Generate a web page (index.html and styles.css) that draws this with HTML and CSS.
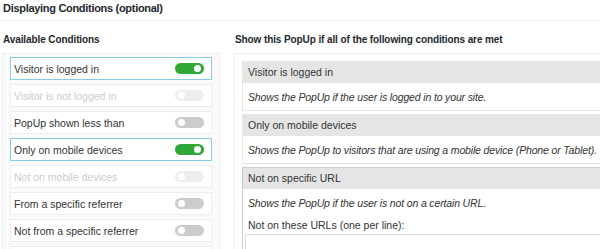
FILE: index.html
```html
<!DOCTYPE html>
<html lang="en">
<head>
    <meta charset="UTF-8">
    <meta name="viewport" content="width=device-width, initial-scale=1.0">
    <title>Displaying Conditions</title>
    <link rel="stylesheet" href="styles.css">
</head>
<body>
    <h2 class="section-title">Displaying Conditions (optional)</h2>

    <div class="columns">
        <div class="col-left">
            <h3 class="col-title">Available Conditions</h3>
            <ul class="cond-list">
                <li class="cond active"><span>Visitor is logged in</span><i class="toggle on"></i></li>
                <li class="cond disabled"><span>Visitor is not logged in</span><i class="toggle"></i></li>
                <li class="cond"><span>PopUp shown less than</span><i class="toggle"></i></li>
                <li class="cond active"><span>Only on mobile devices</span><i class="toggle on"></i></li>
                <li class="cond disabled"><span>Not on mobile devices</span><i class="toggle"></i></li>
                <li class="cond"><span>From a specific referrer</span><i class="toggle"></i></li>
                <li class="cond"><span>Not from a specific referrer</span><i class="toggle"></i></li>
                <li class="cond"><span>Not on specific URL</span><i class="toggle on"></i></li>
            </ul>
        </div>

        <div class="col-right">
            <h3 class="col-title">Show this PopUp if all of the following conditions are met</h3>
            <div class="rules">
                <div class="rule">
                    <div class="rule-head">Visitor is logged in</div>
                    <div class="rule-body"><em>Shows the PopUp if the user is logged in to your site.</em></div>
                </div>
                <div class="rule">
                    <div class="rule-head">Only on mobile devices</div>
                    <div class="rule-body"><em>Shows the PopUp to visitors that are using a mobile device (Phone or Tablet).</em></div>
                </div>
                <div class="rule open">
                    <div class="rule-head">Not on specific URL</div>
                    <div class="rule-body">
                        <em>Shows the PopUp if the user is not on a certain URL.</em>
                        <label class="field-label">Not on these URLs (one per line):</label>
                        <textarea class="urls"></textarea>
                    </div>
                </div>
            </div>
        </div>
    </div>
</body>
</html>
```

FILE: styles.css
```css
html, body {
    overflow: hidden;
}
body {
    font-family: "Liberation Sans", Arial, sans-serif;
    font-size: 10.5px;
    color: #333;
    background: #fff;
    margin: 0;
    padding: 0;
    width: 760px;
}
.section-title {
    font-size: 11px;
    font-weight: bold;
    letter-spacing: -0.3px;
    color: #23282d;
    margin: 0;
    padding: 2px 3px 0;
    height: 18px;
    border-bottom: 1px solid #f1f1f1;
}
.columns {
    display: flex;
    padding: 0 0 0 2px;
}
.col-left {
    width: 218px;
    flex: none;
}
.col-right {
    flex: 1;
    margin-left: 14px;
}
.col-title {
    font-size: 10px;
    font-weight: bold;
    letter-spacing: -0.1px;
    color: #23282d;
    margin: 0;
    padding: 13px 1px 0;
    height: 19px;
}
.cond-list {
    list-style: none;
    margin: 0;
    padding: 3px 7px 0;
    border: 1px solid #eee;
    background: #fafafa;
    height: 240px;
}
.cond {
    display: flex;
    align-items: center;
    justify-content: space-between;
    height: 21px;
    padding: 0 7px 0 3px;
    margin-bottom: 4px;
    background: #fff;
    border: 1px solid #eee;
}
.cond.active {
    border-color: #88cbe6;
}
.cond.disabled span {
    color: #ccc;
}
.toggle {
    position: relative;
    width: 29px;
    height: 11px;
    border-radius: 6px;
    background: #ccc;
}
.toggle::after {
    content: "";
    position: absolute;
    top: 2px;
    left: 3px;
    width: 7px;
    height: 7px;
    border-radius: 50%;
    background: #fff;
}
.toggle.on {
    background: #30a838;
}
.toggle.on::after {
    left: auto;
    right: 3px;
}
.cond.disabled .toggle {
    background: #eee;
}
.rules {
    border: 1px solid #eee;
    padding: 7px 0 0 7px;
    height: 240px;
}
.rule {
    border: 1px solid #e5e5e5;
    margin-bottom: 3px;
    background: #fff;
}
.rule.open {
    border-color: #ccc;
}
.rule-head {
    background: #e5e5e5;
    height: 21px;
    line-height: 21px;
    padding: 0 5px;
}
.rule-body {
    padding: 8px 5px 7px;
    line-height: 12px;
}
.rule-body em {
    letter-spacing: -0.15px;
}
.field-label {
    display: block;
    margin-top: 10px;
}
.urls {
    display: block;
    margin: 3px 0 0 -3px;
    width: 400px;
    height: 40px;
    border: 1px solid #ddd;
}
```
